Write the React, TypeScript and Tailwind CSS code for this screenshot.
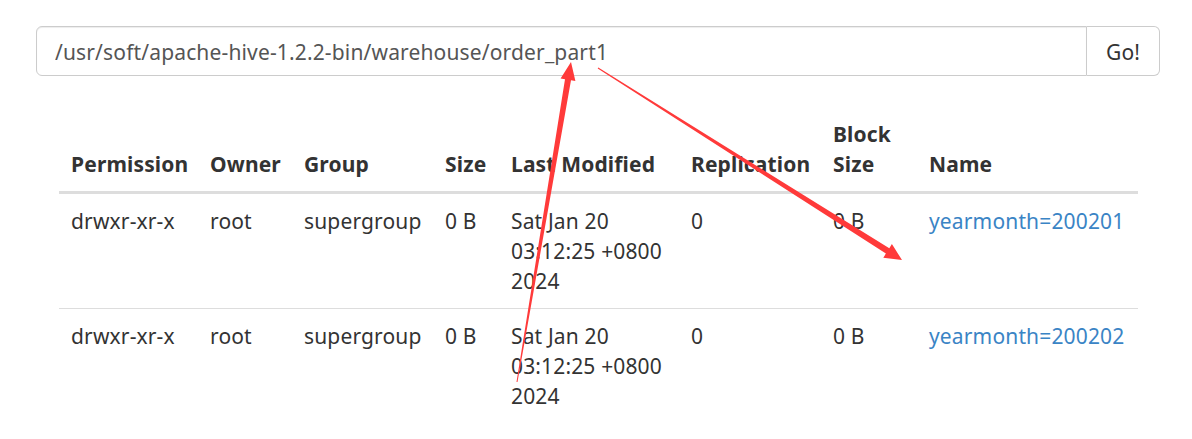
const rows = [
  { perm: "drwxr-xr-x", owner: "root", group: "supergroup", size: "0 B", date: "Sat Jan 20 03:12:25 +0800 2024", repl: "0", block: "0 B", name: "yearmonth=200201" },
  { perm: "drwxr-xr-x", owner: "root", group: "supergroup", size: "0 B", date: "Sat Jan 20 03:12:25 +0800 2024", repl: "0", block: "0 B", name: "yearmonth=200202" },
];

const headers = [
  { label: "Permission", w: "w-[139px]" },
  { label: "Owner", w: "w-[94px]" },
  { label: "Group", w: "w-[141px]" },
  { label: "Size", w: "w-[66px]" },
  { label: "Last Modified", w: "w-[180px]" },
  { label: "Replication", w: "w-[142px]" },
  { label: "Block Size", w: "w-[96px]" },
  { label: "Name", w: "w-[221px]" },
];

function Arrows() {
  return (
    <svg className="pointer-events-none absolute left-0 top-0" width="1192" height="439" viewBox="0 0 1192 439">
      <polygon
        fill="#ff3a3a"
        points="516.5,381.9 565,79.3 560.6,78.5 571,62 575.4,81 571,80.3 517.5,382.1"
      />
      <polygon
        fill="#ff3a3a"
        points="598.3,67.6 889.3,248.2 891.9,244.1 902,260 883.3,257.7 885.9,253.6 597.7,68.4"
      />
    </svg>
  );
}

export default function App() {
  return (
    <div className="relative h-[439px] w-[1192px] overflow-hidden bg-white font-['Noto_Sans',sans-serif] text-[21px] leading-[30px] tracking-[0.15px] text-[#333]">
      <div className="px-[36px] pt-[26px]">
        <div className="flex h-[50px] w-[1124px]">
          <input
            readOnly
            value="/usr/soft/apache-hive-1.2.2-bin/warehouse/order_part1"
            className="h-full flex-1 rounded-l-[6px] border border-[#ccc] px-[18px] pt-[2px] text-[21px] tracking-[0.15px] text-[#555] shadow-[inset_0_1px_1px_rgba(0,0,0,0.075)] outline-none"
          />
          <button className="h-full w-[73px] rounded-r-[6px] border border-l-0 border-[#ccc] bg-white pt-[1px] text-[21px] text-[#333]">
            Go!
          </button>
        </div>
      </div>

      <div className="px-[59px] pt-[31px]">
        <table className="w-[1079px] table-fixed border-collapse">
          <thead>
            <tr>
              {headers.map((h) => (
                <th key={h.label} className={`${h.w} border-b-[3px] border-[#ddd] p-[12px] text-left align-bottom font-bold`}>
                  {h.label}
                </th>
              ))}
            </tr>
          </thead>
          <tbody>
            {rows.map((r) => (
              <tr key={r.name}>
                <td className="border-t border-[#ddd] p-[12px] align-top">{r.perm}</td>
                <td className="border-t border-[#ddd] p-[12px] align-top">{r.owner}</td>
                <td className="border-t border-[#ddd] p-[12px] align-top">{r.group}</td>
                <td className="border-t border-[#ddd] p-[12px] align-top">{r.size}</td>
                <td className="border-t border-[#ddd] p-[12px] align-top">{r.date}</td>
                <td className="border-t border-[#ddd] p-[12px] align-top">{r.repl}</td>
                <td className="border-t border-[#ddd] p-[12px] align-top">{r.block}</td>
                <td className="border-t border-[#ddd] p-[12px] align-top">
                  <a href="#" className="text-[#3a84c5] no-underline">{r.name}</a>
                </td>
              </tr>
            ))}
          </tbody>
        </table>
      </div>

      <Arrows />
    </div>
  );
}
